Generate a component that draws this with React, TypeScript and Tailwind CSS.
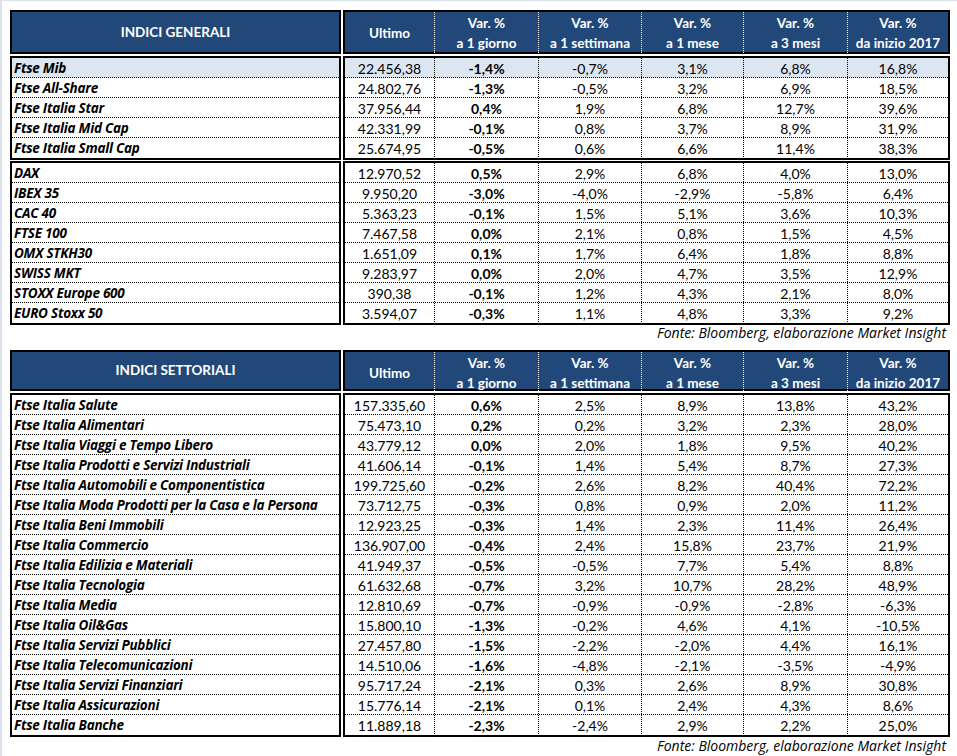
import React from 'react';

type Row = [string, string, string, string, string, string, string];

const generali: Row[] = [
  ['Ftse Mib', '22.456,38', '-1,4%', '-0,7%', '3,1%', '6,8%', '16,8%'],
  ['Ftse All-Share', '24.802,76', '-1,3%', '-0,5%', '3,2%', '6,9%', '18,5%'],
  ['Ftse Italia Star', '37.956,44', '0,4%', '1,9%', '6,8%', '12,7%', '39,6%'],
  ['Ftse Italia Mid Cap', '42.331,99', '-0,1%', '0,8%', '3,7%', '8,9%', '31,9%'],
  ['Ftse Italia Small Cap', '25.674,95', '-0,5%', '0,6%', '6,6%', '11,4%', '38,3%'],
];

const esteri: Row[] = [
  ['DAX', '12.970,52', '0,5%', '2,9%', '6,8%', '4,0%', '13,0%'],
  ['IBEX 35', '9.950,20', '-3,0%', '-4,0%', '-2,9%', '-5,8%', '6,4%'],
  ['CAC 40', '5.363,23', '-0,1%', '1,5%', '5,1%', '3,6%', '10,3%'],
  ['FTSE 100', '7.467,58', '0,0%', '2,1%', '0,8%', '1,5%', '4,5%'],
  ['OMX STKH30', '1.651,09', '0,1%', '1,7%', '6,4%', '1,8%', '8,8%'],
  ['SWISS MKT', '9.283,97', '0,0%', '2,0%', '4,7%', '3,5%', '12,9%'],
  ['STOXX Europe 600', '390,38', '-0,1%', '1,2%', '4,3%', '2,1%', '8,0%'],
  ['EURO Stoxx 50', '3.594,07', '-0,3%', '1,1%', '4,8%', '3,3%', '9,2%'],
];

const settoriali: Row[] = [
  ['Ftse Italia Salute', '157.335,60', '0,6%', '2,5%', '8,9%', '13,8%', '43,2%'],
  ['Ftse Italia Alimentari', '75.473,10', '0,2%', '0,2%', '3,2%', '2,3%', '28,0%'],
  ['Ftse Italia Viaggi e Tempo Libero', '43.779,12', '0,0%', '2,0%', '1,8%', '9,5%', '40,2%'],
  ['Ftse Italia Prodotti e Servizi Industriali', '41.606,14', '-0,1%', '1,4%', '5,4%', '8,7%', '27,3%'],
  ['Ftse Italia Automobili e Componentistica', '199.725,60', '-0,2%', '2,6%', '8,2%', '40,4%', '72,2%'],
  ['Ftse Italia Moda Prodotti per la Casa e la Persona', '73.712,75', '-0,3%', '0,8%', '0,9%', '2,0%', '11,2%'],
  ['Ftse Italia Beni Immobili', '12.923,25', '-0,3%', '1,4%', '2,3%', '11,4%', '26,4%'],
  ['Ftse Italia Commercio', '136.907,00', '-0,4%', '2,4%', '15,8%', '23,7%', '21,9%'],
  ['Ftse Italia Edilizia e Materiali', '41.949,37', '-0,5%', '-0,5%', '7,7%', '5,4%', '8,8%'],
  ['Ftse Italia Tecnologia', '61.632,68', '-0,7%', '3,2%', '10,7%', '28,2%', '48,9%'],
  ['Ftse Italia Media', '12.810,69', '-0,7%', '-0,9%', '-0,9%', '-2,8%', '-6,3%'],
  ['Ftse Italia Oil&Gas', '15.800,10', '-1,3%', '-0,2%', '4,6%', '4,1%', '-10,5%'],
  ['Ftse Italia Servizi Pubblici', '27.457,80', '-1,5%', '-2,2%', '-2,0%', '4,4%', '16,1%'],
  ['Ftse Italia Telecomunicazioni', '14.510,06', '-1,6%', '-4,8%', '-2,1%', '-3,5%', '-4,9%'],
  ['Ftse Italia Servizi Finanziari', '95.717,24', '-2,1%', '0,3%', '2,6%', '8,9%', '30,8%'],
  ['Ftse Italia Assicurazioni', '15.776,14', '-2,1%', '0,1%', '2,4%', '4,3%', '8,6%'],
  ['Ftse Italia Banche', '11.889,18', '-2,3%', '-2,4%', '2,9%', '2,2%', '25,0%'],
];

const cols = 'grid grid-cols-[89px_104px_103px_102px_104px_101px]';
const periods = ['a 1 giorno', 'a 1 settimana', 'a 1 mese', 'a 3 mesi', 'da inizio 2017'];

function Header({ title, height }: { title: string; height: string }) {
  return (
    <div className="flex gap-[2px] text-[13.5px]">
      <div className={`w-[331px] ${height} border-2 border-black bg-[#22487a] flex items-center justify-center text-white font-bold`}>
        {title}
      </div>
      <div className={`w-[607px] ${height} border-2 border-black bg-[#22487a] ${cols} text-white font-bold leading-[20px]`}>
        <div className="flex items-center justify-center">Ultimo</div>
        {periods.map((p) => (
          <div key={p} className="border-l border-dotted border-white flex flex-col items-center justify-center pt-[1px]">
            <span>Var. %</span>
            <span>{p}</span>
          </div>
        ))}
      </div>
    </div>
  );
}

function Body({ rows, highlight }: { rows: Row[]; highlight?: number }) {
  return (
    <div className="flex gap-[2px]">
      <div className="w-[331px] border-2 border-black">
        {rows.map((r, i) => (
          <div
            key={r[0]}
            className={`h-[20px] pl-[2px] pt-[1px] flex items-center font-['Open_Sans',sans-serif] text-[13.5px] tracking-[-0.25px] font-bold italic whitespace-nowrap ${i < rows.length - 1 ? 'border-b border-dotted border-black' : ''} ${i === highlight ? 'bg-[#dce6f1]' : ''}`}
          >
            {r[0]}
          </div>
        ))}
      </div>
      <div className="w-[607px] border-2 border-black">
        {rows.map((r, i) => (
          <div
            key={r[0]}
            className={`h-[20px] ${cols} ${i < rows.length - 1 ? 'border-b border-dotted border-black' : ''} ${i === highlight ? 'bg-[#dce6f1]' : ''}`}
          >
            {r.slice(1).map((v, j) => (
              <div
                key={j}
                className={`flex items-center justify-center ${j > 0 ? 'border-l border-dotted border-black' : ''} ${j === 1 ? 'font-bold' : ''}`}
              >
                {v}
              </div>
            ))}
          </div>
        ))}
      </div>
    </div>
  );
}

function Fonte({ className }: { className: string }) {
  return (
    <div className={`w-[940px] text-right italic pr-[4px] font-['Open_Sans',sans-serif] text-[14px] whitespace-nowrap ${className}`}>
      Fonte: Bloomberg, elaborazione Market Insight
    </div>
  );
}

export default function App() {
  return (
    <div className="w-[957px] h-[756px] bg-white border-l-2 border-t border-[#dbe2ec] pl-[8px] pt-[9px] font-['Lato','Open_Sans',sans-serif] text-[14px] text-black overflow-hidden">
      <div className="flex flex-col gap-[2px]">
        <Header title="INDICI GENERALI" height="h-[44px]" />
        <Body rows={generali} highlight={0} />
      </div>
      <div className="mt-[1px]">
        <Body rows={esteri} />
      </div>
      <Fonte className="h-[16px] leading-[16px]" />
      <div className="mt-[9px] flex flex-col gap-[2px]">
        <Header title="INDICI SETTORIALI" height="h-[41px]" />
        <Body rows={settoriali} />
      </div>
      <Fonte className="h-[18px] leading-[18px]" />
    </div>
  );
}
